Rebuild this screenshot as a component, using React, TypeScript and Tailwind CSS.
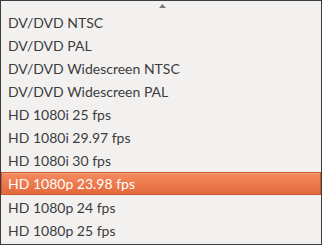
import React from "react";

const items = [
  "DV/DVD NTSC",
  "DV/DVD PAL",
  "DV/DVD Widescreen NTSC",
  "DV/DVD Widescreen PAL",
  "HD 1080i 25 fps",
  "HD 1080i 29.97 fps",
  "HD 1080i 30 fps",
  "HD 1080p 23.98 fps",
  "HD 1080p 24 fps",
  "HD 1080p 25 fps",
];

export default function App() {
  return (
    <div className="w-[322px] h-[245px] bg-[#f2f1f0] border border-[#3c3c3c] flex flex-col overflow-hidden"
      style={{ fontFamily: 'Lato, "Open Sans", sans-serif' }}>
      <div className="h-[9px] flex justify-center items-start pt-[3px]">
        <svg width="7" height="4" viewBox="0 0 7 4" className="ml-[3px]">
          <polygon points="3.5,0 7,4 0,4" fill="#7a7a7a" />
        </svg>
      </div>
      <div className="flex flex-col">
        {items.map((t, i) => {
          const sel = i === 7;
          return (
            <div
              key={t}
              className={
                sel
                  ? "h-[23.14px] flex items-center pl-[6px] text-[14px] text-white bg-gradient-to-b from-[#f48b5f] to-[#e4693a] border border-[#c75830] shadow-[inset_0_1px_0_#f7a17c]"
                  : "h-[23.14px] flex items-center pl-[6px] text-[14px] text-[#3c3c3c] border border-transparent"
              }
            >
              <span className="leading-none pt-[2px]">{t}</span>
            </div>
          );
        })}
      </div>
    </div>
  );
}
